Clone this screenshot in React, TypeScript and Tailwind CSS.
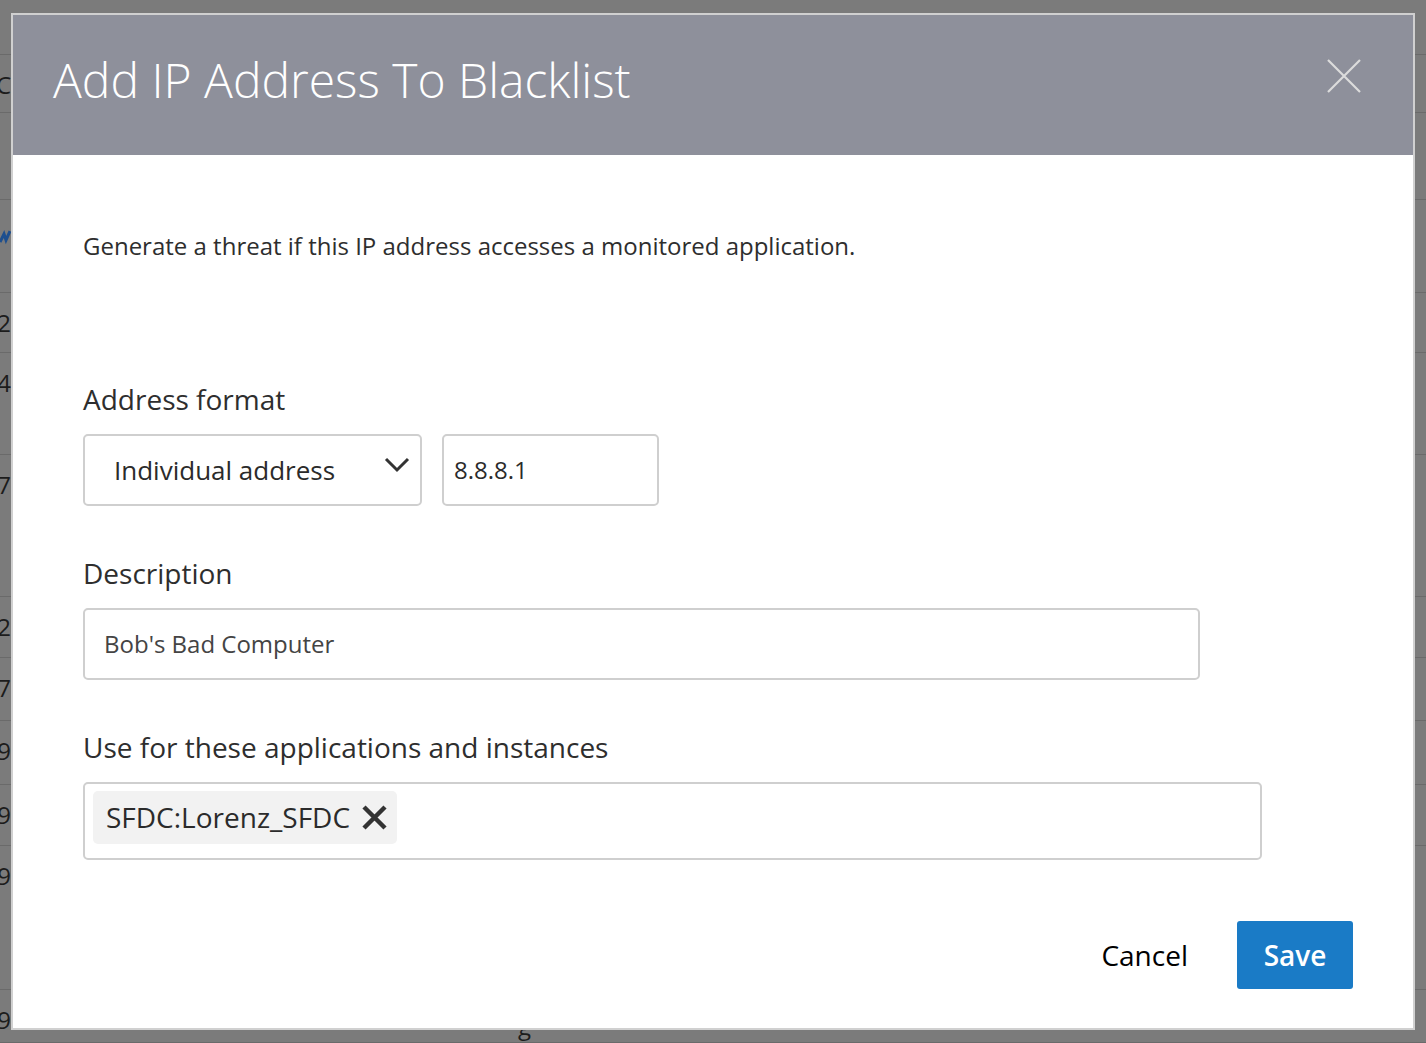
import React from 'react';

const rows = [
  { h: 55, cell: '' },
  { h: 58, cell: 'C' },
  { h: 87, cell: '' },
  { h: 93, cell: 'icon' },
  { h: 60, cell: '2' },
  { h: 102, cell: '4' },
  { h: 142, cell: '7' },
  { h: 61, cell: '2' },
  { h: 63, cell: '7' },
  { h: 64, cell: '9' },
  { h: 61, cell: '9' },
  { h: 144, cell: '9' },
  { h: 53, cell: '9' },
];

function Backdrop() {
  return (
    <div className="w-full h-[1043px] bg-[#7b7b7b] overflow-hidden">
      {rows.map((r, i) => (
        <div
          key={i}
          style={{ height: r.h }}
          className="flex items-start pt-[14px] border-b border-[#6a6a6a] text-[#1c1c1c] text-[24px] leading-[32px]"
        >
          <div className="w-[11px] flex justify-end">
            {r.cell === 'icon' ? (
              <svg width="11" height="18" viewBox="0 0 11 18" className="mt-[14px]">
                <path d="M0 14 L4 6 L6 12 L10 3" fill="none" stroke="#1d4f8f" strokeWidth="3" />
              </svg>
            ) : (
              <span>{r.cell}</span>
            )}
          </div>
          {i === rows.length - 1 && <span className="ml-[507px] mt-[6px]">g</span>}
        </div>
      ))}
    </div>
  );
}

export default function App() {
  return (
    <div className="relative w-[1426px] h-[1043px] overflow-hidden" style={{ fontFamily: '"Open Sans", "Noto Sans", sans-serif' }}>
      <Backdrop />

      {/* Modal */}
      <div className="absolute left-[11px] top-[13px] w-[1404px] h-[1017px] border-2 border-[#d0d0d0] bg-white flex flex-col">
        {/* Header */}
        <div className="h-[140px] bg-[#8e909b] flex items-center justify-between pl-[40px] pr-[52px] shrink-0">
          <h2 className="text-[48px] font-light text-white leading-none -mt-[10px]">Add IP Address To Blacklist</h2>
          <button className="w-[34px] h-[34px] -mt-[18px] text-[#dcdcdc]">
            <svg viewBox="0 0 34 34" width="34" height="34">
              <path d="M1 1 L33 33 M33 1 L1 33" stroke="currentColor" strokeWidth="2.2" fill="none" />
            </svg>
          </button>
        </div>

        {/* Body */}
        <div className="flex flex-col pl-[70px] pr-[60px] pt-[76px] text-[#333]">
          <p className="text-[24px] leading-[30px] text-[#2e2e2e]">
            Generate a threat if this IP address accesses a monitored application.
          </p>

          <label className="mt-[120px] text-[28px] leading-[36px] text-[#2e2e2e]">Address format</label>
          <div className="mt-[17px] flex gap-[20px]">
            <div className="w-[339px] h-[72px] border-2 border-[#cfcfcf] rounded-[5px] flex items-center justify-between pl-[29px] pr-[10px]">
              <span className="text-[26px] text-[#2b2b2b]">Individual address</span>
              <svg width="26" height="16" viewBox="0 0 26 16" className="-mt-[10px]">
                <path d="M2 2 L13 13 L24 2" stroke="#333" strokeWidth="3" fill="none" />
              </svg>
            </div>
            <div className="w-[217px] h-[72px] border-2 border-[#cfcfcf] rounded-[5px] flex items-center pl-[10px]">
              <span className="text-[24px] text-[#2b2b2b]">8.8.8.1</span>
            </div>
          </div>

          <label className="mt-[49px] text-[28px] leading-[36px] text-[#2e2e2e]">Description</label>
          <div className="mt-[17px] w-[1117px] h-[72px] border-2 border-[#cfcfcf] rounded-[5px] flex items-center pl-[19px]">
            <span className="text-[24px] text-[#444]">Bob's Bad Computer</span>
          </div>

          <label className="mt-[49px] text-[28px] leading-[36px] text-[#2e2e2e]">
            Use for these applications and instances
          </label>
          <div className="mt-[17px] w-[1179px] h-[78px] border-2 border-[#cfcfcf] rounded-[5px] flex items-center pl-[8px]">
            <div className="h-[53px] bg-[#f2f2f2] rounded-[5px] flex items-center pl-[13px] pr-[10px] gap-[12px] -mt-[8px]">
              <span className="text-[28px] text-[#2b2b2b]">SFDC:Lorenz_SFDC</span>
              <svg width="25" height="25" viewBox="0 0 25 25">
                <path d="M2 2 L23 23 M23 2 L2 23" stroke="#333" strokeWidth="4.5" fill="none" />
              </svg>
            </div>
          </div>

          <div className="mt-[61px] flex justify-end items-center gap-[49px]">
            <button className="text-[28px] text-black">Cancel</button>
            <button className="w-[116px] h-[68px] bg-[#1a7bc6] rounded-[3px] text-white text-[28px] font-semibold">
              Save
            </button>
          </div>
        </div>
      </div>
    </div>
  );
}
